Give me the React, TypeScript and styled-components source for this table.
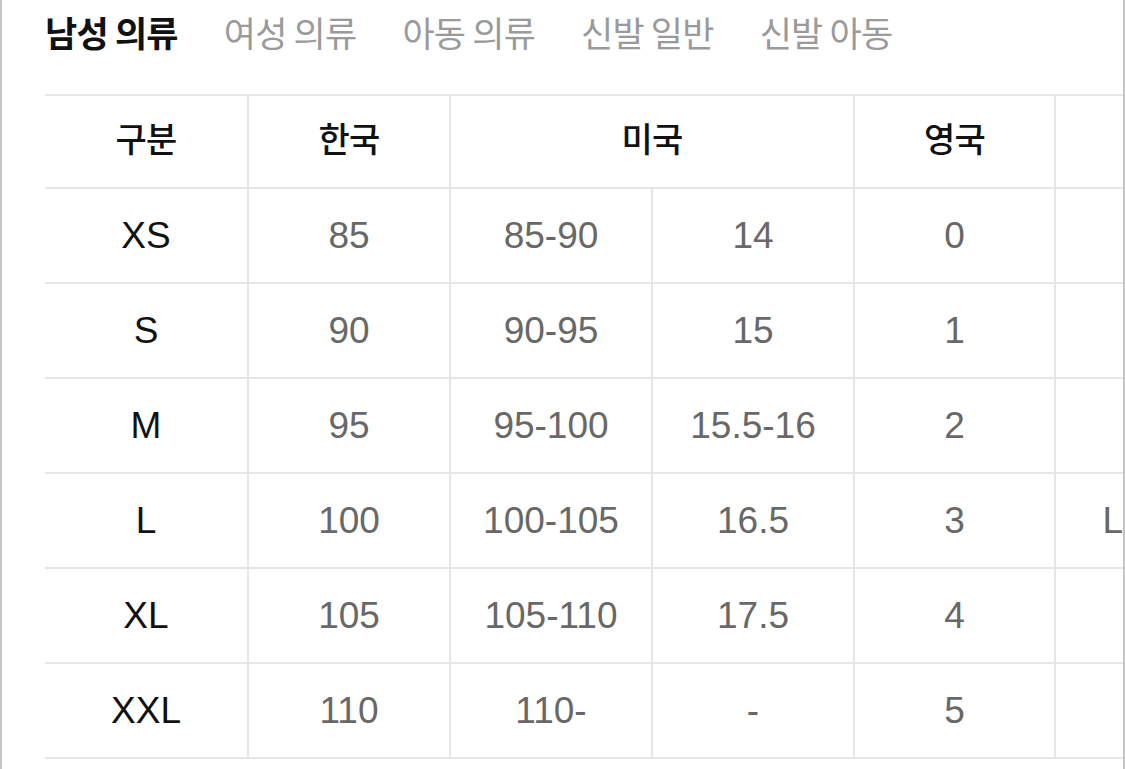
import React from "react";
import styled, { createGlobalStyle } from "styled-components";

const Global = createGlobalStyle`
  html, body { margin: 0; padding: 0; background: #fff; }
  body { font-family: "Liberation Sans", "Noto Sans CJK KR", sans-serif; }
`;

const Frame = styled.div`
  box-sizing: border-box;
  width: 1125px;
  height: 769px;
  overflow: hidden;
  border-left: 2px solid #c4c4c4;
  border-right: 2px solid #c4c4c4;
  background: #fff;
  padding-left: 43px;
`;

const Tabs = styled.nav`
  display: flex;
  gap: 46px;
  height: 94px;
  padding-top: 7px;
  box-sizing: border-box;
  align-items: flex-start;
`;

const Tab = styled.span<{ $active?: boolean }>`
  font-family: "Noto Sans CJK KR", sans-serif;
  font-size: 35px;
  line-height: 50px;
  letter-spacing: -0.8px;
  font-weight: ${(p) => (p.$active ? 700 : 400)};
  color: ${(p) => (p.$active ? "#111" : "#9a9a9a")};
  white-space: nowrap;
`;

const Table = styled.table`
  border-collapse: collapse;
  table-layout: fixed;
  width: 1212px;
  border-top: 2px solid #e6e6e6;
`;

const Col = styled.col<{ $w: number }>`
  width: ${(p) => p.$w}px;
`;

const HeadCell = styled.th`
  height: 84px;
  padding: 0 0 7px;
  text-align: center;
  vertical-align: middle;
  border-bottom: 2px solid #e6e6e6;
  border-right: 2px solid #e6e6e6;
  white-space: nowrap;
  font-family: "Noto Sans CJK KR", sans-serif;
  font-size: 34px;
  line-height: 40px;
  font-weight: 500;
  color: #111;
  letter-spacing: -0.8px;
`;

const Cell = styled.td<{ $label?: boolean }>`
  height: 93px;
  padding: 0;
  text-align: center;
  vertical-align: middle;
  border-bottom: 2px solid #e6e6e6;
  border-right: 2px solid #e6e6e6;
  white-space: nowrap;
  font-family: "Liberation Sans", sans-serif;
  font-size: 37px;
  line-height: 40px;
  font-weight: 400;
  color: ${(p) => (p.$label ? "#111" : "#686868")};
`;

const tabs = ["남성 의류", "여성 의류", "아동 의류", "신발 일반", "신발 아동"];
const widths = [203, 202, 202, 202, 201, 202];

const rows: string[][] = [
  ["XS", "85", "85-90", "14", "0", ""],
  ["S", "90", "90-95", "15", "1", ""],
  ["M", "95", "95-100", "15.5-16", "2", ""],
  ["L", "100", "100-105", "16.5", "3", "L(100)"],
  ["XL", "105", "105-110", "17.5", "4", ""],
  ["XXL", "110", "110-", "-", "5", ""],
];

export default function App() {
  return (
    <>
      <Global />
      <Frame>
        <Tabs>
          {tabs.map((t, i) => (
            <Tab key={t} $active={i === 0}>
              {t}
            </Tab>
          ))}
        </Tabs>
        <Table>
          <colgroup>
            {widths.map((w, i) => (
              <Col key={i} $w={w} />
            ))}
          </colgroup>
          <thead>
            <tr>
              <HeadCell>구분</HeadCell>
              <HeadCell>한국</HeadCell>
              <HeadCell colSpan={2}>미국</HeadCell>
              <HeadCell>영국</HeadCell>
              <HeadCell></HeadCell>
            </tr>
          </thead>
          <tbody>
            {rows.map((r) => (
              <tr key={r[0]}>
                {r.map((v, i) => (
                  <Cell key={i} $label={i === 0}>
                    {v}
                  </Cell>
                ))}
              </tr>
            ))}
          </tbody>
        </Table>
      </Frame>
    </>
  );
}
